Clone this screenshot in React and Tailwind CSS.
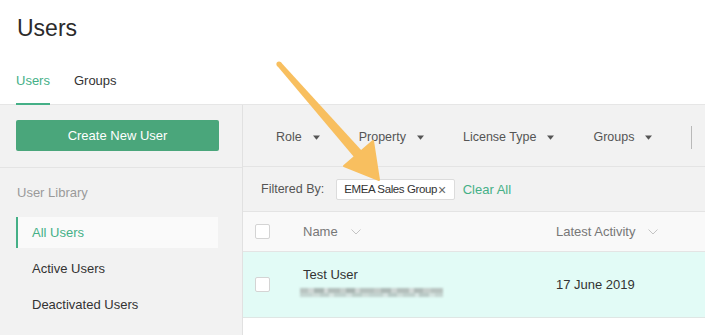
import React from 'react';

const filters = ['Role', 'Property', 'License Type', 'Groups'];

const blurBlocks = [
  'w-[8px] bg-[#b9c4c1]', 'w-[6px] bg-[#cfd7d5]', 'w-[10px] bg-[#aab6b3]', 'w-[4px] bg-[#d5dcda]',
  'w-[12px] bg-[#b3bebb]', 'w-[6px] bg-[#c6cfcc]', 'w-[9px] bg-[#a9b5b2]', 'w-[5px] bg-[#d0d8d6]',
  'w-[14px] bg-[#b6c1be]', 'w-[7px] bg-[#c3ccc9]', 'w-[10px] bg-[#adb9b6]', 'w-[6px] bg-[#cdd5d3]',
  'w-[12px] bg-[#b4bfbc]', 'w-[5px] bg-[#d3dad8]', 'w-[9px] bg-[#b0bbb8]', 'w-[8px] bg-[#c5cecb]',
  'w-[12px] bg-[#b8c3c0]',
];

const Caret = () => (
  <svg width="7" height="5" viewBox="0 0 7 5" className="ml-[11px]">
    <path d="M0 0.5h7L3.5 4.8z" fill="#555" />
  </svg>
);

const Chevron = () => (
  <svg width="10" height="6" viewBox="0 0 10 6" className="ml-[13px]">
    <path d="M0.5 0.5L5 5l4.5-4.5" fill="none" stroke="#c4c4c4" strokeWidth="1" />
  </svg>
);

const Checkbox = () => (
  <div className="w-[15px] h-[15px] bg-white border border-[#d4d4d4] rounded-[2px] shrink-0" />
);

const Sidebar = () => (
  <div className="w-[243px] shrink-0 bg-[#f2f2f2] border-r border-[#e1e1e1]">
    <div className="px-[16px] pt-[15px] pb-[16px] border-b border-[#e4e4e4]">
      <button className="w-[203px] h-[31px] bg-[#4aa67b] rounded-[2px] text-white text-[13px] leading-[16px]">
        Create New User
      </button>
    </div>
    <div className="pt-[17px]">
      <div className="pl-[17px] text-[13px] leading-[16px] text-[#9a9a9a]">User Library</div>
      <div className="mt-[16px] pl-[16px] pr-[24px] flex flex-col">
        <div className="h-[31px] bg-[#fafafa] border-l-2 border-[#45b087] flex items-center pl-[14px] text-[13px] text-[#45b087]">
          All Users
        </div>
        <div className="mt-[3px] h-[36px] flex items-center pl-[16px] text-[13px] text-[#333]">Active Users</div>
        <div className="h-[35px] flex items-center pl-[16px] text-[13px] text-[#333]">Deactivated Users</div>
      </div>
    </div>
  </div>
);

const Content = () => (
  <div className="flex-1 flex flex-col">
    <div className="h-[62px] bg-[#f2f2f2] border-b border-[#e4e4e4] flex items-center pl-[33px] pt-[3px] gap-[39px]">
      {filters.map((f) => (
        <div key={f} className="flex items-center text-[12.5px] text-[#555]">
          {f}
          <Caret />
        </div>
      ))}
      <div className="w-px h-[23px] bg-[#b9b9b9]" />
    </div>
    <div className="h-[45px] bg-[#f2f2f2] border-b border-[#e4e4e4] flex items-center pl-[18px] pt-[1px]">
      <span className="text-[12.5px] text-[#555]">Filtered By:</span>
      <div className="ml-[12px] h-[21px] bg-white border border-[#dcdcdc] rounded-[2px] flex items-center pl-[7px] pr-[8px] text-[11.5px] tracking-[-0.4px] text-[#333]">
        EMEA Sales Group<span className="ml-[1px] text-[14px] leading-[14px] text-[#666]">×</span>
      </div>
      <span className="ml-[8px] text-[13px] text-[#45b087]">Clear All</span>
    </div>
    <div className="h-[40px] bg-[#f9f9f9] border-b border-[#e4e4e4] flex items-center pl-[12px]">
      <Checkbox />
      <div className="ml-[33px] w-[253px] flex items-center text-[13px] text-[#777]">
        Name
        <Chevron />
      </div>
      <div className="flex items-center text-[13px] text-[#777]">
        Latest Activity
        <Chevron />
      </div>
    </div>
    <div className="h-[66px] bg-[#e2fbf6] border-b border-[#dfe6e4] flex items-center pl-[12px]">
      <Checkbox />
      <div className="ml-[33px] w-[253px] flex flex-col">
        <span className="text-[13px] leading-[16px] text-[#333] mt-[-6px]">Test User</span>
        <div className="mt-[5px] ml-[-3px] flex flex-col blur-[0.8px]">
          <div className="flex h-[5px]">
            {blurBlocks.map((c, i) => (
              <span key={i} className={c} />
            ))}
          </div>
          <div className="flex h-[4px] opacity-70">
            {blurBlocks.slice().reverse().map((c, i) => (
              <span key={i} className={c} />
            ))}
          </div>
        </div>
      </div>
      <div className="text-[13px] text-[#333]">17 June 2019</div>
    </div>
    <div className="flex-1 bg-white" />
  </div>
);

export default function App() {
  return (
    <div
      className="relative w-[705px] h-[335px] overflow-hidden bg-white flex flex-col"
      style={{ fontFamily: '"Liberation Sans", Arial, sans-serif' }}
    >
      <div className="h-[105px] shrink-0 border-b border-[#e6e6e6] flex flex-col">
        <h1 className="mt-[14px] ml-[17px] text-[23px] leading-[28px] text-[#2b2b2b] font-normal">Users</h1>
        <div className="mt-auto -mb-px ml-[16px] flex gap-[24px] text-[13px] leading-[16px]">
          <div className="pb-[14px] border-b-2 border-[#45b087] text-[#45b087]">Users</div>
          <div className="pb-[14px] border-b-2 border-transparent text-[#333]">Groups</div>
        </div>
      </div>
      <div className="flex-1 flex">
        <Sidebar />
        <Content />
      </div>
      <svg className="absolute inset-0 pointer-events-none" width="705" height="335" viewBox="0 0 705 335">
        <circle cx="279" cy="64" r="2.6" fill="#f8bf5f" />
        <polygon points="280.9,62.3 277.1,65.7 354.2,157.3 361.8,150.7" fill="#f8bf5f" />
        <polygon points="344,166 373,141 379,180" fill="#f8bf5f" stroke="#f8bf5f" strokeWidth="2" strokeLinejoin="round" />
      </svg>
    </div>
  );
}
